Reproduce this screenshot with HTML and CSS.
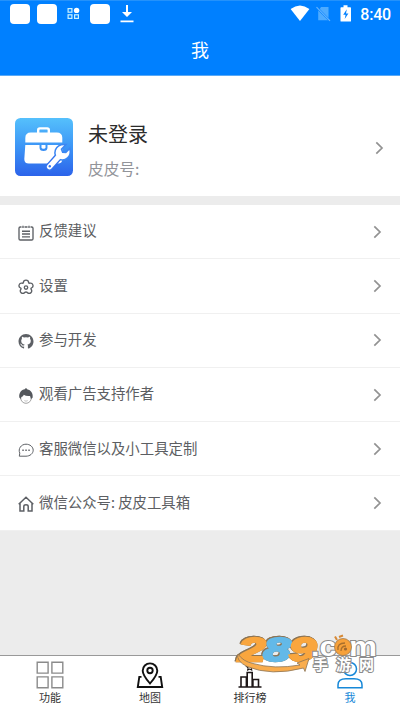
FILE: index.html
```html
<!DOCTYPE html>
<html lang="zh-CN">
<head>
<meta charset="utf-8">
<title>我</title>
<link rel="stylesheet" href="styles.css">
</head>
<body>
<div class="app">
  <header class="header">
    <div class="status">
      <div class="status-left">
        <span class="block"></span>
        <span class="block"></span>
        <svg class="apps" width="13" height="13" viewBox="0 0 13 13" fill="none" stroke="#c9f2ff" stroke-width="1.2"><rect x="1.1" y="1.6" width="3.8" height="3.6"/><rect x="1.1" y="7.8" width="3.8" height="3.6"/><rect x="7.6" y="7.8" width="3.8" height="3.6"/><circle cx="9.6" cy="3.4" r="2.7" fill="#fff" stroke="none"/></svg>
        <span class="block"></span>
        <svg class="download" width="14" height="18" viewBox="0 0 14 18"><path d="M6 0h2v7h4l-5 5-5-5h4zM.5 15.5h13v1.7H.5z" fill="#fff"/></svg>
      </div>
      <div class="status-right">
        <svg width="20" height="17" viewBox="0 0 20 17"><path d="M.6 4Q10-3.2 19.4 4L10 16z" fill="#fff"/></svg>
        <svg class="sim" width="15" height="16" viewBox="0 0 15 16"><path d="M5 1h7.5v11L3.8 3zM2.2 4.5L12 14.2H2.2z" fill="#4eabff"/><path d="M.5 1.2L14 14.8" stroke="#64b3ff" stroke-width="1.2"/></svg>
        <svg class="battery" width="12" height="17" viewBox="0 0 12 17"><path d="M3.5.3h4v1.9h2.8q.7 0 .7.7v13q0 .7-.7.7H1.2q-.7 0-.7-.7v-13q0-.7.7-.7h2.3z" fill="#fff"/><path d="M6.8 4.2L3.2 9.8h2.4L4.700 14l3.700-5.400H6z" fill="#0080ff"/></svg>
        <span class="clock">8:40</span>
      </div>
    </div>
    <h1 class="title">我</h1>
  </header>

  <section class="profile">
    <svg class="avatar" width="58" height="58" viewBox="0 0 58 58">
      <defs><linearGradient id="sky" x1="0" y1="0" x2="0" y2="1"><stop offset="0" stop-color="#55c0fc"/><stop offset=".5" stop-color="#3c95f6"/><stop offset="1" stop-color="#2c63ea"/></linearGradient></defs>
      <rect width="58" height="58" rx="5.5" fill="url(#sky)"/>
      <path d="M23.200 15v-3q0-1.600 1.600-1.600h7.400q1.600 0 1.600 1.600v3" fill="none" stroke="#fff" stroke-width="2.400"/>
      <path d="M10.300 24.600V20q0-5.500 5.500-5.500h26q5.500 0 5.500 5.500v4.600z" fill="#fff"/>
      <path d="M10.300 27h14.200v2.500q0 3.500 4 3.500t4-3.500V27h14.800v14q0 4.500-4.500 4.500h-29q-4.500 0-4.500-4.500z" fill="#fff"/>
      <path d="M26.500 27h4v2.300q0 1.500-2 1.500t-2-1.500z" fill="#fff"/>
      <path d="M34.500 48.800L44 38.200" stroke="#3473ee" stroke-width="8" stroke-linecap="round"/>
      <path d="M49.200 27.300L45.600 31l1.500 4 4 .3 3.200-3.400q1 4.500-2.200 7.400-3.500 3-8 1.100-4.600-3.300-3-8.200 2.200-5 8.100-4.900z" fill="#fff" stroke="#3c87f3" stroke-width="3"/>
      <path d="M34.500 48.800L44 38.200" stroke="#fff" stroke-width="5.200" stroke-linecap="round"/>
      <path d="M49.200 27.300L45.600 31l1.500 4 4 .3 3.200-3.400q1 4.500-2.200 7.400-3.500 3-8 1.100-4.600-3.300-3-8.200 2.200-5 8.100-4.900z" fill="#fff"/>
      <circle cx="34.800" cy="48.300" r="1.200" fill="#3473ee"/>
    </svg>
    <div class="who">
      <div class="name">未登录</div>
      <div class="uid">皮皮号:</div>
    </div>
    <svg class="arrow" width="9" height="14" viewBox="0 0 9 14"><path d="M1.300 1.300L7 7l-5.700 5.700"/></svg>
  </section>

  <ul class="menu">
    <li class="row">
      <svg class="icon" viewBox="0 0 16 16"><path d="M3.500 2H2.300Q1 2 1 3.300v10.400Q1 15 2.300 15h11.400q1.300 0 1.300-1.300V3.300Q15 2 13.700 2h-1.200M6.500 2h3M5 .8v2.200M11 .8v2.200M4 6.200h8M4 9h8M4 11.800h8"/></svg>
      <span class="label">反馈建议</span>
      <svg class="arrow" width="9" height="14" viewBox="0 0 9 14"><path d="M1.300 1.300L7 7l-5.700 5.700"/></svg>
    </li>
    <li class="row">
      <svg class="icon" viewBox="0 0 16 16"><path d="M5.400 3.500C5.500.3 10.500.3 10.600 3.500c.2.700.5.900 1.200.700 3.100-.6 4.500 3.500 1.600 4.800-.6.500-.6.800-.2 1.400 1.700 2.900-1.600 5.300-4 3-.8-.6-1.600-.6-2.400 0-2.400 2.300-5.700-.1-4-3 .4-.6.400-.9-.2-1.400C-.3 7.700 1.100 3.600 4.200 4.200c.7.200 1 0 1.200-.7z"/><circle cx="8" cy="8.500" r="1.700"/></svg>
      <span class="label">设置</span>
      <svg class="arrow" width="9" height="14" viewBox="0 0 9 14"><path d="M1.300 1.300L7 7l-5.700 5.700"/></svg>
    </li>
    <li class="row">
      <svg class="icon solid" viewBox="0 0 16 16"><path d="M8 .9C3.900.9.500 4.200.5 8.400c0 3.300 2.100 6.100 5.100 7.100.4.100.5-.2.500-.4v-1.500c-2 .4-2.500-.6-2.700-1-.1-.3-.5-1-.9-1.300-.3-.1-.6-.5 0-.5.700 0 1.200.600 1.300.9.700 1.200 1.800.9 2.300.7.100-.5.200-.8.500-1-1.700-.2-3.400-.9-3.400-3.700 0-.8.300-1.500.8-2-.1-.2-.4-1 .1-2 0 0 .6-.2 2 .8a7 7 0 0 1 3.800 0c1.400-1 2-.8 2-.8.500 1 .2 1.800.1 2 .5.500.8 1.200.8 2 0 2.800-1.700 3.500-3.400 3.700.3.200.5.700.5 1.400v2.300c0 .2.100.5.500.4 3-1 5.100-3.800 5.100-7.100C15.500 4.200 12.100.9 8 .9z"/></svg>
      <span class="label">参与开发</span>
      <svg class="arrow" width="9" height="14" viewBox="0 0 9 14"><path d="M1.300 1.300L7 7l-5.700 5.700"/></svg>
    </li>
    <li class="row">
      <svg class="icon face" viewBox="0 0 16 16"><circle cx="8" cy="10" r="5.300" fill="#fff" stroke="#999" stroke-width=".9"/><path d="M1.300 9.600C.7 4.500 3.500 1.800 6.800 1.200Q7.200 0 8.800.5l.3.700c4 .8 6.200 4.300 5.500 8.500l-1.600 1.200-.9-2.900Q8 8.500 5.800 6.800 5.300 8.500 3.300 9l-.6 2z" fill="#54575c"/><path d="M6.300 12.600q1.700 1.200 3.400 0" fill="none" stroke="#aaa" stroke-width=".7"/></svg>
      <span class="label">观看广告支持作者</span>
      <svg class="arrow" width="9" height="14" viewBox="0 0 9 14"><path d="M1.300 1.300L7 7l-5.700 5.700"/></svg>
    </li>
    <li class="row">
      <svg class="icon thin" viewBox="0 0 16 16"><path d="M1.300 14.200l.5-3.100C-.2 7 3 2.200 8 2.200c4 0 7.200 2.700 7.200 6s-3.200 6-7.200 6z"/><path d="M4.300 7.500h1.500v1.500H4.300zM7.300 7.500h1.500v1.500H7.300zM10.300 7.500h1.500v1.500h-1.500z" fill="#66686c" stroke="none"/></svg>
      <span class="label">客服微信以及小工具定制</span>
      <svg class="arrow" width="9" height="14" viewBox="0 0 9 14"><path d="M1.300 1.300L7 7l-5.700 5.700"/></svg>
    </li>
    <li class="row">
      <svg class="icon" viewBox="0 0 16 16"><path d="M.7 8.300L8 1.300l7.300 7M2 7.500V15h3.800v-4.500q0-1.700 2.200-1.700t2.200 1.700V15H14V7.500" stroke-width="1.500"/></svg>
      <span class="label">微信公众号: 皮皮工具箱</span>
      <svg class="arrow" width="9" height="14" viewBox="0 0 9 14"><path d="M1.300 1.300L7 7l-5.700 5.700"/></svg>
    </li>
  </ul>

  <nav class="tabs">
    <div class="tab">
      <svg width="28" height="28" viewBox="0 0 28 28" fill="none" stroke="#8b8b8b" stroke-width="1.400"><path d="M1.200 1.200h10.900v10.900H1.200zM15.900 1.200h10.900v10.900H15.900zM1.200 15.900h10.900v10.900H1.200zM15.900 15.900h10.900v10.900H15.900z"/></svg>
      <span>功能</span>
    </div>
    <div class="tab">
      <svg width="28" height="28" viewBox="0 0 28 28" fill="none" stroke="#111" stroke-width="1.900"><path d="M14 22.500C9.500 17.300 6.700 13.500 6.700 9.700a7.300 7.300 0 0 1 14.600 0c0 3.800-2.800 7.600-7.300 12.800z"/><circle cx="14" cy="9.500" r="2.700"/><path d="M5.500 15.900H3.300L1.800 26h24.400l-1.500-10.100h-2.200"/></svg>
      <span>地图</span>
    </div>
    <div class="tab">
      <svg width="28" height="28" viewBox="0 0 28 28" fill="none" stroke="#1d1617" stroke-width="1.600"><path d="M2.500 26h23M5 25.700V16h5.400v9.700M11.200 25.700V11.500h5v14.200M16.900 25.700v-7.200h5.600v7.200"/><path d="M13.700 3l1 2 2.200.3-1.600 1.500.4 2.200-2-1-2 1 .4-2.200-1.600-1.500 2.200-.3z" stroke-width="1.100"/></svg>
      <span>排行榜</span>
    </div>
    <div class="tab active">
      <svg width="28" height="28" viewBox="0 0 28 28" fill="none" stroke="#1688d8" stroke-width="1.500"><circle cx="14" cy="8" r="6.500"/><path d="M2 26.700V24q0-6.200 8-6.200h8q8 0 8 6.200v2.700z"/></svg>
      <span>我</span>
    </div>
  </nav>

  <svg class="brand" width="150" height="52" viewBox="-4 -6 150 52">
    <g class="digits">
      <text x="2.500" y="27" textLength="27" lengthAdjust="spacingAndGlyphs" fill="#f9a63e" stroke="#f9a63e">2</text>
      <text x="27.500" y="27" textLength="27" lengthAdjust="spacingAndGlyphs" fill="#63b9e8" stroke="#63b9e8">8</text>
      <text x="53" y="27" textLength="27" lengthAdjust="spacingAndGlyphs" fill="#f9a63e" stroke="#f9a63e">9</text>
    </g>
    <path d="M2 20Q0 27 11 32.500q24 10 56.500 1.500l1.500 3.500L73 24.500 61 29l3 2Q38 35.500 17 29.500 7 27.500 2 20z" fill="#f9ad4e" stroke="#8b7455" stroke-width=".8"/>
    <g class="domain">
      <text x="75" y="21.500" textLength="25.500" lengthAdjust="spacingAndGlyphs">.c</text>
      <text x="113" y="21.500" textLength="28" lengthAdjust="spacingAndGlyphs">m</text>
    </g>
    <g class="site">
      <text x="77" y="35.500">手</text>
      <text x="100" y="35.500">游</text>
      <text x="123" y="35.500">网</text>
    </g>
    <path d="M101 6l-2-3.500M103 3l4-1.500" stroke="#d78a37" stroke-width="2"/>
    <circle cx="107" cy="13" r="8.500" fill="#f7a13a" stroke="#a37b4d" stroke-width=".8"/>
    <path d="M102 16q-1-7 7-7M105 17q0-5 5-5" fill="none" stroke="#a96f2c" stroke-width="1.300"/><circle cx="109.500" cy="15" r="1.600" fill="#9d6730"/>
  </svg>
</div>
</body>
</html>
```
FILE: styles.css
```css
* { box-sizing: border-box; }
body {
  margin: 0;
  font-family: "Noto Sans CJK SC", sans-serif;
  background: #ececec;
}
svg { display: block; flex: none; }
.app {
  position: relative;
  display: flex;
  flex-direction: column;
  width: 400px;
  height: 711px;
  overflow: hidden;
  background: #ececec;
}
.header {
  height: 76px;
  background: #0080ff;
  border-top: 1px solid #2492fb;
  border-bottom: 1px solid #59a9f6;
  color: #fff;
}
.status {
  display: flex;
  justify-content: space-between;
  height: 25px;
  padding: 0 9px 0 10px;
}
.status-left, .status-right { display: flex; align-items: center; }
.block { width: 20px; height: 20px; margin-right: 7px; border-radius: 4px; background: #fff; }
.apps { margin: 0 10px 0 3px; }
.download { margin-left: 3px; }
.sim { margin-left: 6px; }
.battery { margin-left: 9px; }
.clock { margin-left: 8px; padding-top: 2px; font: 500 16px/24px Roboto, sans-serif; letter-spacing: -0.2px; }
.title {
  margin: 9px 0 0;
  font-size: 18px;
  font-weight: 400;
  line-height: 28px;
  text-align: center;
}
.profile {
  display: flex;
  align-items: center;
  height: 120px;
  padding: 22px 16px 0 15.4px;
  background: #fff;
}
.profile .arrow { margin-top: 2px; }
.who { flex: 1; margin: 7px 0 0 14.6px; }
.name { font-size: 20px; line-height: 34px; color: #2c2c2c; }
.uid { margin-top: 3px; font-size: 15.7px; line-height: 30px; color: #92949a; }
.arrow { fill: none; stroke: #929292; stroke-width: 1.7; }
.menu { margin: 9px 0 0; padding: 0; list-style: none; background: #fff; }
.row {
  display: flex;
  align-items: center;
  height: 54.3px;
  padding: 0 18px;
  border-bottom: 1px solid #f0f0f0;
}
.icon {
  width: 16px;
  height: 16px;
  margin-top: 2px;
  fill: none;
  stroke: #5d6065;
  stroke-width: 1.35;
}
.solid { fill: #5d6065; stroke: none; }
.face { stroke: none; }
.thin { stroke-width: 1; }
.label {
  flex: 1;
  margin: -2.5px 0 0 5px;
  font-size: 14.4px;
  line-height: 24px;
  color: #5c5e62;
}
.tabs {
  display: flex;
  height: 56px;
  margin-top: auto;
  padding-top: 5px;
  border-top: 1px solid #999;
  background: #fff;
}
.tab {
  display: flex;
  flex: 1;
  flex-direction: column;
  align-items: center;
  font-size: 11px;
  line-height: 17px;
  color: #333;
}
.active { color: #1688d8; }
.brand { position: absolute; left: 232px; top: 628px; }
.digits {
  font: italic bold 33px "Liberation Sans", sans-serif;
  stroke-width: 2.4;
  filter: drop-shadow(0.5px 0.5px 0 #8b7455) drop-shadow(-0.5px -0.5px 0 #8b7455);
}
.domain {
  font: bold 28px "Liberation Sans", sans-serif;
  fill: #fff;
  stroke: #8c8c8c;
  stroke-width: 2;
  paint-order: stroke;
}
.site {
  font: bold 15px "Noto Sans CJK SC", sans-serif;
  fill: #fff;
  stroke: #8c8c8c;
  stroke-width: 2;
  paint-order: stroke;
}
```
